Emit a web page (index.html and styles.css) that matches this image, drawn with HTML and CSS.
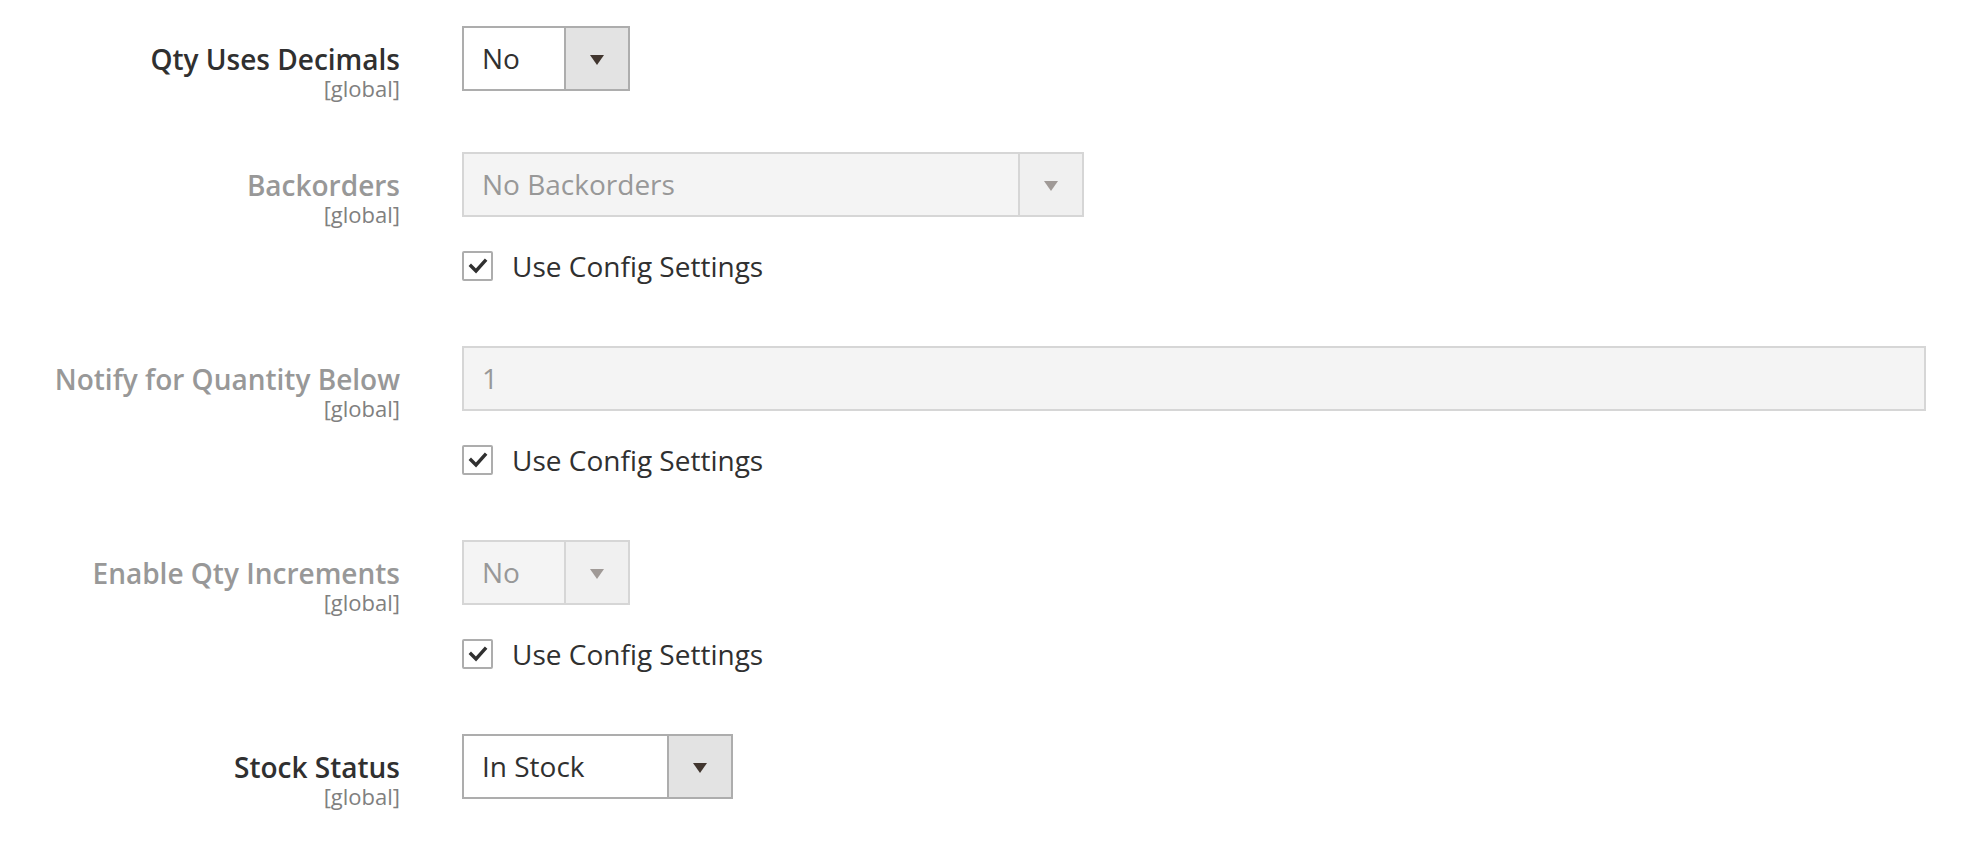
FILE: index.html
```html
<!DOCTYPE html>
<html lang="en">
<head>
<meta charset="utf-8">
<title>Advanced Inventory</title>
<link rel="stylesheet" href="styles.css">
</head>
<body>
<div class="form">
  <div class="field">
    <div class="field-label"><label class="label-text">Qty Uses Decimals</label><span class="scope">[global]</span></div>
    <div class="field-control">
      <div class="select select-sm"><span class="select-value">No</span><span class="select-arrow"></span></div>
    </div>
  </div>

  <div class="field is-disabled">
    <div class="field-label"><label class="label-text">Backorders</label><span class="scope">[global]</span></div>
    <div class="field-control">
      <div class="select select-lg"><span class="select-value">No Backorders</span><span class="select-arrow"></span></div>
      <div class="checkbox-row">
        <span class="checkbox"><svg width="20" height="16" viewBox="0 0 20 16"><polyline points="3,8 8,13 17,3" fill="none" stroke="#303030" stroke-width="3.4" stroke-linecap="square"/></svg></span>
        <span class="checkbox-label">Use Config Settings</span>
      </div>
    </div>
  </div>

  <div class="field is-disabled">
    <div class="field-label"><label class="label-text">Notify for Quantity Below</label><span class="scope">[global]</span></div>
    <div class="field-control">
      <div class="input">1</div>
      <div class="checkbox-row">
        <span class="checkbox"><svg width="20" height="16" viewBox="0 0 20 16"><polyline points="3,8 8,13 17,3" fill="none" stroke="#303030" stroke-width="3.4" stroke-linecap="square"/></svg></span>
        <span class="checkbox-label">Use Config Settings</span>
      </div>
    </div>
  </div>

  <div class="field is-disabled">
    <div class="field-label"><label class="label-text">Enable Qty Increments</label><span class="scope">[global]</span></div>
    <div class="field-control">
      <div class="select select-sm"><span class="select-value">No</span><span class="select-arrow"></span></div>
      <div class="checkbox-row">
        <span class="checkbox"><svg width="20" height="16" viewBox="0 0 20 16"><polyline points="3,8 8,13 17,3" fill="none" stroke="#303030" stroke-width="3.4" stroke-linecap="square"/></svg></span>
        <span class="checkbox-label">Use Config Settings</span>
      </div>
    </div>
  </div>

  <div class="field">
    <div class="field-label"><label class="label-text">Stock Status</label><span class="scope">[global]</span></div>
    <div class="field-control">
      <div class="select select-md"><span class="select-value">In Stock</span><span class="select-arrow"></span></div>
    </div>
  </div>
</div>
</body>
</html>
```

FILE: styles.css
```css
* {
  box-sizing: border-box;
}

html, body {
  margin: 0;
  padding: 0;
  background: #ffffff;
}

body {
  font-family: "Open Sans", "Noto Sans", sans-serif;
  color: #303030;
  overflow: hidden;
}

.form {
  display: flex;
  flex-direction: column;
  padding: 26px 48px 0 0;
}

.field {
  display: grid;
  grid-template-columns: 400px 1fr;
  column-gap: 62px;
  align-items: start;
  margin-bottom: 61px;
}

.field-label {
  display: flex;
  flex-direction: column;
  align-items: flex-end;
  text-align: right;
  padding-top: 14px;
  margin-bottom: -8px;
}

.label-text {
  font-size: 28px;
  font-weight: 600;
  line-height: 38px;
  color: #303030;
}

.is-disabled .label-text {
  color: #989898;
}

.scope {
  font-size: 22px;
  line-height: 21px;
  color: #808080;
}

.field-control {
  display: flex;
  flex-direction: column;
  align-items: flex-start;
}

.select {
  display: flex;
  height: 65px;
  border: 2px solid #adadad;
  background: #ffffff;
}

.select-sm { width: 168px; }
.select-md { width: 271px; }
.select-lg { width: 622px; }

.select-value {
  flex: 1;
  padding-left: 18px;
  font-size: 28px;
  line-height: 61px;
  color: #303030;
  white-space: nowrap;
}

.select-arrow {
  width: 64px;
  border-left: 2px solid #adadad;
  background: #e3e3e3;
  display: flex;
  align-items: center;
  justify-content: center;
  padding-top: 2px;
}

.select-arrow::after {
  content: "";
  width: 0;
  height: 0;
  border-left: 7.5px solid transparent;
  border-right: 7.5px solid transparent;
  border-top: 10px solid #41362f;
}

.is-disabled .select {
  border-color: #d6d6d6;
  background: #f4f4f4;
}

.is-disabled .select-value {
  color: #989898;
}

.is-disabled .select-arrow {
  border-left-color: #d6d6d6;
  background: #f0f0f0;
}

.is-disabled .select-arrow::after {
  border-top-color: #a09a97;
}

.input {
  width: 100%;
  height: 65px;
  border: 2px solid #d6d6d6;
  background: #f4f4f4;
  padding-left: 18px;
  font-size: 28px;
  line-height: 61px;
  color: #989898;
}

.checkbox-row {
  display: flex;
  align-items: center;
  gap: 19px;
  margin: 34px 0 4px;
  height: 30px;
}

.checkbox {
  width: 31px;
  height: 30px;
  border: 2px solid #adadad;
  border-radius: 2px;
  background: #ffffff;
  display: flex;
  align-items: center;
  justify-content: center;
}

.checkbox svg {
  display: block;
}

.checkbox-label {
  font-size: 28px;
  line-height: 30px;
  color: #303030;
  white-space: nowrap;
}
```
